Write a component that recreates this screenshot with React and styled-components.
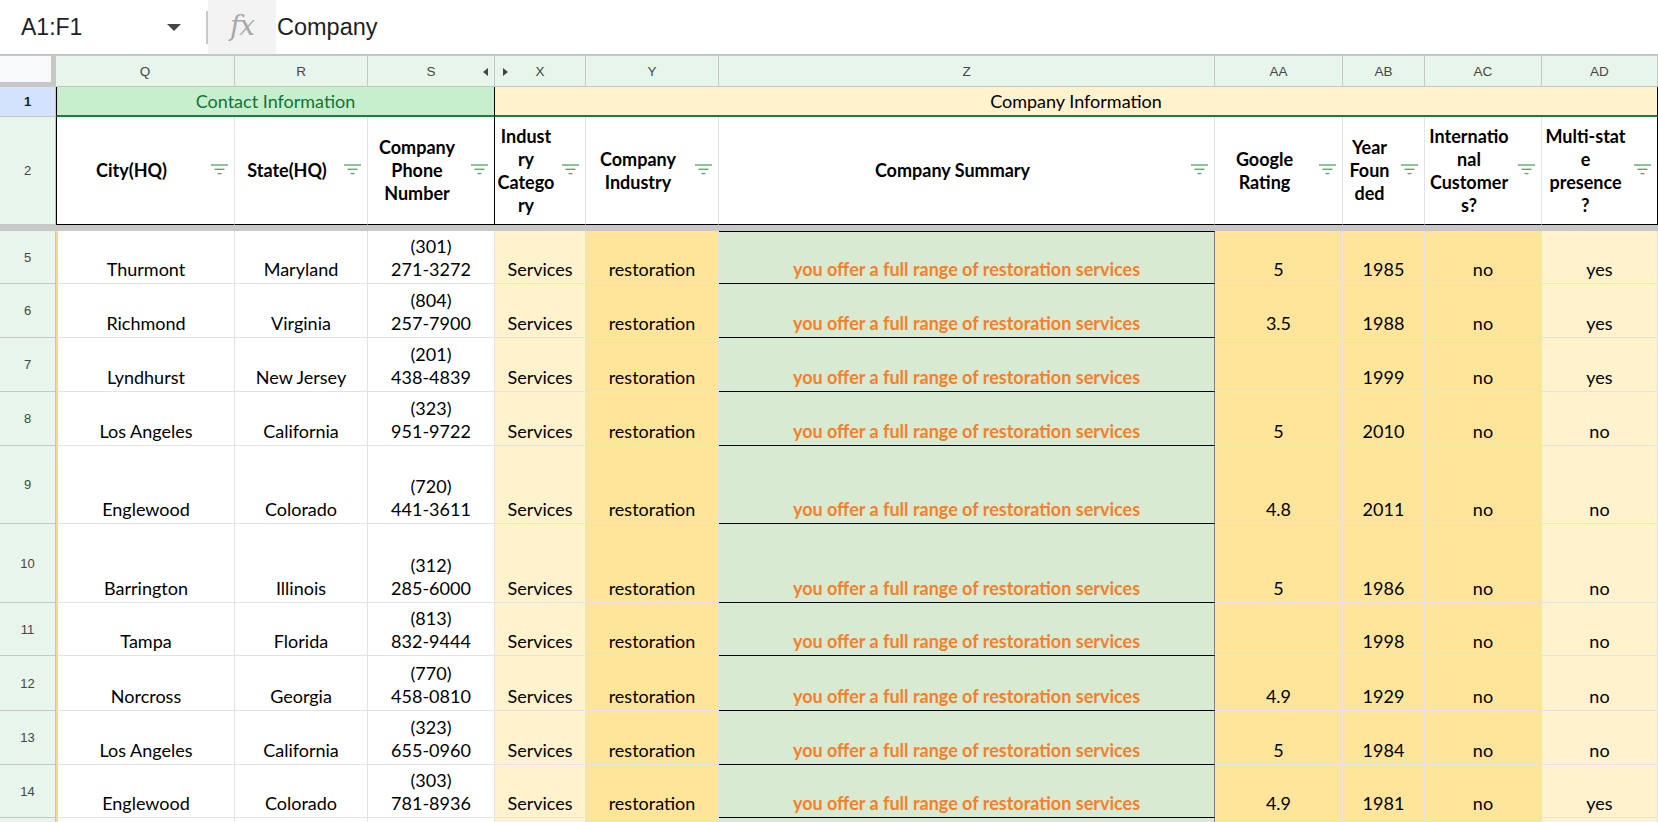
import React from "react";
import styled, { createGlobalStyle } from "styled-components";

// column template: row header, Q R S X Y Z AA AB AC AD
const COLS = "56px 179px 133px 127px 91px 133px 496px 128px 82px 117px 116px";
const GRID = "#e2e3e3";
const HEAD_LINE = "#c4c7c5";
const MINT = "#e7f5ea";

const letters = ["Q", "R", "S", "X", "Y", "Z", "AA", "AB", "AC", "AD"];

const headers = [
  ["City(HQ)"],
  ["State(HQ)"],
  ["Company", "Phone", "Number"],
  ["Indust", "ry", "Catego", "ry"],
  ["Company", "Industry"],
  ["Company Summary"],
  ["Google", "Rating"],
  ["Year", "Foun", "ded"],
  ["Internatio", "nal", "Customer", "s?"],
  ["Multi-stat", "e", "presence", "?"],
];

const colBg = ["#fff", "#fff", "#fff", "#fff2cc", "#ffe599", "#d9ead3", "#ffe599", "#ffe599", "#ffe599", "#fff2cc"];

const SUMMARY = "you offer a full range of restoration services";

const rows = [
  { n: 5, h: 53, city: "Thurmont", state: "Maryland", phone: ["(301)", "271-3272"], rating: "5", year: "1985", intl: "no", multi: "yes" },
  { n: 6, h: 54, city: "Richmond", state: "Virginia", phone: ["(804)", "257-7900"], rating: "3.5", year: "1988", intl: "no", multi: "yes" },
  { n: 7, h: 54, city: "Lyndhurst", state: "New Jersey", phone: ["(201)", "438-4839"], rating: "", year: "1999", intl: "no", multi: "yes" },
  { n: 8, h: 54, city: "Los Angeles", state: "California", phone: ["(323)", "951-9722"], rating: "5", year: "2010", intl: "no", multi: "no" },
  { n: 9, h: 78, city: "Englewood", state: "Colorado", phone: ["(720)", "441-3611"], rating: "4.8", year: "2011", intl: "no", multi: "no" },
  { n: 10, h: 79, city: "Barrington", state: "Illinois", phone: ["(312)", "285-6000"], rating: "5", year: "1986", intl: "no", multi: "no" },
  { n: 11, h: 53, city: "Tampa", state: "Florida", phone: ["(813)", "832-9444"], rating: "", year: "1998", intl: "no", multi: "no" },
  { n: 12, h: 55, city: "Norcross", state: "Georgia", phone: ["(770)", "458-0810"], rating: "4.9", year: "1929", intl: "no", multi: "no" },
  { n: 13, h: 54, city: "Los Angeles", state: "California", phone: ["(323)", "655-0960"], rating: "5", year: "1984", intl: "no", multi: "no" },
  { n: 14, h: 53, city: "Englewood", state: "Colorado", phone: ["(303)", "781-8936"], rating: "4.9", year: "1981", intl: "no", multi: "yes" },
];

const GlobalStyle = createGlobalStyle`
  html, body { margin: 0; padding: 0; background: #fff; overflow: hidden; }
  body { font-family: Lato, "Liberation Sans", sans-serif; color: #000; }
  * { box-sizing: border-box; }
`;

const Page = styled.div`
  width: 1658px;
  height: 822px;
  overflow: hidden;
  background: #fff;
`;

/* ---------- formula bar ---------- */

const FormulaBar = styled.div`
  display: flex;
  align-items: stretch;
  height: 56px;
  border-bottom: 2px solid ${HEAD_LINE};
`;

const NameBox = styled.div`
  width: 206px;
  display: flex;
  align-items: center;
  padding-left: 21px;
  font-family: "Liberation Sans", Arial, sans-serif;
  font-size: 23px;
  color: #1f1f1f;
`;

const NameText = styled.span`
  flex: 1;
`;

const Caret = styled.svg`
  margin-right: 25px;
`;

const Divider = styled.div`
  width: 2px;
  height: 33px;
  align-self: center;
  background: #c9c9c9;
`;

const FxBox = styled.div`
  width: 68px;
  background: #f3f3f3;
  display: flex;
  align-items: center;
  justify-content: center;
  font-family: "DejaVu Serif", serif;
  font-style: italic;
  font-size: 28px;
  letter-spacing: -1px;
  color: #a9a9a9;
  padding-bottom: 3px;
`;

const FormulaText = styled.div`
  display: flex;
  align-items: center;
  padding-left: 1px;
  font-family: "Liberation Sans", Arial, sans-serif;
  font-size: 23.5px;
  color: #1f1f1f;
`;

/* ---------- grid ---------- */

const Row = styled.div`
  display: grid;
  grid-template-columns: ${COLS};
  height: ${(p) => p.$h}px;
`;

const Corner = styled.div`
  background: #f8f9fa;
  border-right: 5px solid #c7c7c7;
  border-bottom: 5px solid #c7c7c7;
`;

const ColLetter = styled.div`
  position: relative;
  background: ${MINT};
  border-right: 1px solid ${HEAD_LINE};
  border-bottom: 1px solid ${HEAD_LINE};
  display: flex;
  align-items: center;
  justify-content: center;
  font-family: "Liberation Sans", Arial, sans-serif;
  font-size: 13.5px;
  color: #444746;
`;

const HiddenMark = styled.span`
  position: absolute;
  top: 12px;
  width: 0;
  height: 0;
  border-top: 4px solid transparent;
  border-bottom: 4px solid transparent;
  ${(p) =>
    p.$dir === "left"
      ? `right: 6px; border-right: 5px solid #444;`
      : `left: 8px; border-left: 5px solid #444;`}
`;

const RowHead = styled.div`
  background: ${(p) => (p.$selected ? "#d3e3fd" : MINT)};
  border-right: 1px solid ${HEAD_LINE};
  border-bottom: 1px solid ${HEAD_LINE};
  display: flex;
  align-items: center;
  justify-content: center;
  font-family: "Liberation Sans", Arial, sans-serif;
  font-size: 13px;
  font-weight: ${(p) => (p.$selected ? 700 : 400)};
  color: ${(p) => (p.$selected ? "#041e49" : "#444746")};
`;

const GroupCell = styled.div`
  grid-column: span ${(p) => p.$span};
  background: ${(p) => p.$bg};
  color: ${(p) => p.$color};
  border-bottom: 2px solid #188038;
  border-right: 1px solid #000;
  ${(p) => p.$left && "border-left: 1px solid #000; box-shadow: inset 1px 0 0 #f4c7c3;"}
  display: flex;
  align-items: center;
  justify-content: center;
  font-size: 18px;
`;

const HeadCell = styled.div`
  background: #fff;
  border-bottom: 1px solid #000;
  border-right: 1px solid ${(p) => (p.$edge ? "#000" : GRID)};
  ${(p) => p.$left && "border-left: 1px solid #000;"}
  display: flex;
  align-items: center;
`;

const HeadText = styled.div`
  flex: 1;
  text-align: center;
  font-weight: 700;
  font-size: 18px;
  line-height: 23px;
  white-space: nowrap;
`;

const FilterIcon = styled.svg`
  flex: none;
  margin: 0 6px 2px 5px;
`;

const FreezeBand = styled.div`
  height: 6px;
  background: #c8c8c8;
`;

const Cell = styled.div`
  background: ${(p) => p.$bg};
  border-right: 1px solid ${(p) => (p.$summary ? "#808080" : GRID)};
  border-bottom: 1px solid ${(p) => (p.$summary ? "#000" : GRID)};
  ${(p) => p.$summary && p.$first && "border-top: 1px solid #000;"}
  ${(p) => p.$leftMark && "border-left: 2px solid #f5d98c;"}
  display: flex;
  flex-direction: column;
  justify-content: flex-end;
  align-items: center;
  padding-bottom: 2px;
  font-size: 18px;
  line-height: 23px;
  white-space: nowrap;
  overflow: hidden;
  color: ${(p) => (p.$summary ? "#f6802a" : "#000")};
  font-weight: ${(p) => (p.$summary ? 700 : 400)};
`;

const Filter = () => (
  <FilterIcon width="17" height="11" viewBox="0 0 17 11">
    <g stroke="#5ea96f" strokeWidth="1.4">
      <line x1="0" y1="1" x2="17" y2="1" />
      <line x1="3.5" y1="5.3" x2="13.5" y2="5.3" />
      <line x1="6.5" y1="9.6" x2="10.5" y2="9.6" />
    </g>
  </FilterIcon>
);

const DataRow = ({ r, first, blank }) => {
  const values = blank
    ? Array(10).fill("")
    : [r.city, r.state, r.phone, "Services", "restoration", SUMMARY, r.rating, r.year, r.intl, r.multi];
  return (
    <Row $h={r.h}>
      <RowHead>{blank ? "" : r.n}</RowHead>
      {values.map((v, i) => (
        <Cell
          key={i}
          $bg={colBg[i]}
          $summary={i === 5}
          $first={first}
          $leftMark={i === 0}
        >
          {Array.isArray(v) ? v.map((line) => <div key={line}>{line}</div>) : v}
        </Cell>
      ))}
    </Row>
  );
};

export default function App() {
  return (
    <Page>
      <GlobalStyle />
      <FormulaBar>
        <NameBox>
          <NameText>A1:F1</NameText>
          <Caret width="14" height="7" viewBox="0 0 14 7">
            <polygon points="0,0 14,0 7,7" fill="#444746" />
          </Caret>
        </NameBox>
        <Divider />
        <FxBox>fx</FxBox>
        <FormulaText>Company</FormulaText>
      </FormulaBar>

      <Row $h={31}>
        <Corner />
        {letters.map((l) => (
          <ColLetter key={l}>
            {l}
            {l === "S" && <HiddenMark $dir="left" />}
            {l === "X" && <HiddenMark $dir="right" />}
          </ColLetter>
        ))}
      </Row>

      <Row $h={30}>
        <RowHead $selected>1</RowHead>
        <GroupCell $span={3} $bg="#c6efce" $color="#137333" $left>
          Contact Information
        </GroupCell>
        <GroupCell $span={7} $bg="#fff2cc" $color="#000">
          Company Information
        </GroupCell>
      </Row>

      <Row $h={108}>
        <RowHead>2</RowHead>
        {headers.map((lines, i) => (
          <HeadCell key={i} $left={i === 0} $edge={i === 2 || i === 9}>
            <HeadText>
              {lines.map((line) => (
                <div key={line}>{line}</div>
              ))}
            </HeadText>
            <Filter />
          </HeadCell>
        ))}
      </Row>

      <FreezeBand />

      {rows.map((r, idx) => (
        <DataRow key={r.n} r={r} first={idx === 0} />
      ))}
      <DataRow r={{ n: 15, h: 40 }} blank />
    </Page>
  );
}
